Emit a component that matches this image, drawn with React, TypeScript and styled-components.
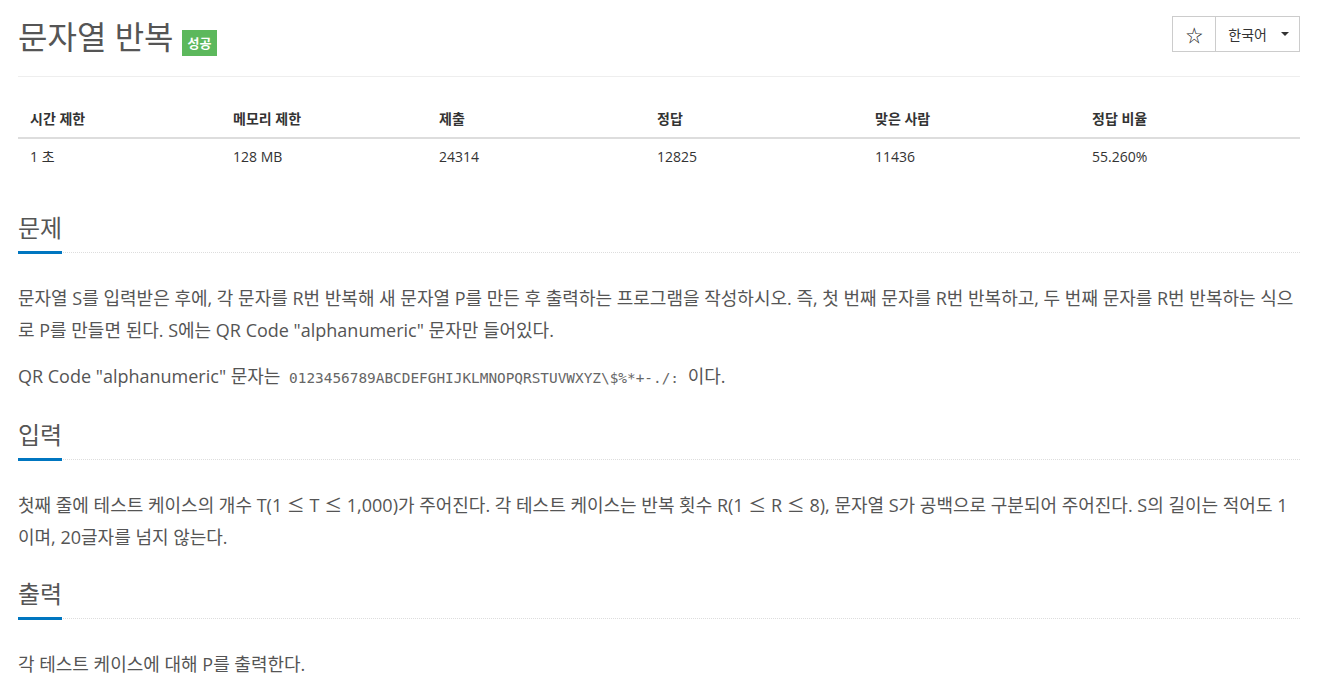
import React from "react";
import styled, { createGlobalStyle } from "styled-components";

const GlobalStyle = createGlobalStyle`
  html, body { margin: 0; padding: 0; background: #fff; }
  body {
    font-family: "Open Sans", "Noto Sans CJK KR", sans-serif;
    color: #333;
    font-size: 14px;
  }
`;

const Page = styled.div`
  padding: 0 22px 0 18px;
`;

const Header = styled.header`
  display: flex;
  justify-content: space-between;
  align-items: flex-start;
  padding-top: 16px;
  padding-bottom: 19px;
  border-bottom: 1px solid #eee;
`;

const Title = styled.h1`
  display: flex;
  align-items: center;
  margin: 1px 0 0;
  font-size: 32px;
  line-height: 40px;
  font-weight: 400;
  color: #555;
`;

const Badge = styled.span`
  display: inline-block;
  margin: 11px 0 0 8px;
  padding: 0 6px;
  height: 26px;
  line-height: 26px;
  font-size: 13px;
  font-weight: 700;
  color: #fff;
  background: #5cb85c;
`;

const BtnGroup = styled.div`
  display: flex;
`;

const Btn = styled.button<{ $first?: boolean }>`
  display: flex;
  align-items: center;
  justify-content: center;
  gap: 14px;
  height: 36px;
  min-width: ${(p) => (p.$first ? "44px" : "0")};
  padding: ${(p) => (p.$first ? "0" : "0 10px 0 12px")};
  border: 1px solid #ccc;
  border-left-width: ${(p) => (p.$first ? "1px" : "0")};
  background: #fff;
  color: #333;
  font-family: "Open Sans", "Noto Sans CJK KR", sans-serif;
  font-size: 14px;
  cursor: pointer;
`;

const Star = styled.span`
  font-family: "Noto Sans CJK KR", "DejaVu Sans", sans-serif;
  font-size: 17px;
  line-height: 1;
  color: #222;
`;

const Caret = styled.span`
  display: inline-block;
  width: 0;
  height: 0;
  border-top: 4px solid #333;
  border-left: 4px solid transparent;
  border-right: 4px solid transparent;
`;

const InfoTable = styled.div`
  margin: 24px 0 36px;
`;

const InfoRow = styled.div<{ $head?: boolean }>`
  display: grid;
  grid-template-columns: 203px 206px 218px 218px 217px 1fr;
  border-bottom: ${(p) => (p.$head ? "2px solid #ddd" : "0")};
`;

const Cell = styled.div<{ $head?: boolean }>`
  padding: 8px 12px;
  line-height: 20px;
  font-size: 14px;
  font-weight: ${(p) => (p.$head ? 700 : 400)};
  color: #333;
`;

const Section = styled.section`
  & + & {
    margin-top: 24px;
  }
`;

const SectionHead = styled.div`
  display: flex;
  border-bottom: 1px dotted #ddd;
  margin-bottom: 29px;
`;

const SectionTitle = styled.h2`
  margin: 0 0 -2px;
  padding-bottom: 6px;
  font-size: 24px;
  line-height: 34px;
  font-weight: 400;
  color: #555;
  border-bottom: 3px solid #0076c0;
`;

const Para = styled.p`
  margin: 0 0 14px;
  font-size: 18px;
  line-height: 32px;
  color: #555;
`;

const Sym = styled.span`
  font-family: "Noto Sans CJK KR", sans-serif;
  line-height: 0;
`;

const Code = styled.code`
  font-family: "DejaVu Sans Mono", monospace;
  font-size: 14.4px;
  padding: 2px 4px;
  color: #666;
`;

const heads = ["시간 제한", "메모리 제한", "제출", "정답", "맞은 사람", "정답 비율"];
const values = ["1 초", "128 MB", "24314", "12825", "11436", "55.260%"];

export default function App() {
  return (
    <>
      <GlobalStyle />
      <Page>
        <Header>
          <Title>
            문자열 반복<Badge>성공</Badge>
          </Title>
          <BtnGroup>
            <Btn $first>
              <Star>☆</Star>
            </Btn>
            <Btn>
              한국어
              <Caret />
            </Btn>
          </BtnGroup>
        </Header>

        <InfoTable>
          <InfoRow $head>
            {heads.map((h) => (
              <Cell $head key={h}>
                {h}
              </Cell>
            ))}
          </InfoRow>
          <InfoRow>
            {values.map((v) => (
              <Cell key={v}>{v}</Cell>
            ))}
          </InfoRow>
        </InfoTable>

        <Section>
          <SectionHead>
            <SectionTitle>문제</SectionTitle>
          </SectionHead>
          <Para>
            문자열 S를 입력받은 후에, 각 문자를 R번 반복해 새 문자열 P를 만든 후 출력하는 프로그램을 작성하시오. 즉, 첫 번째 문자를 R번 반복하고, 두 번째 문자를 R번 반복하는 식으로 P를 만들면 된다. S에는 QR Code "alphanumeric" 문자만 들어있다.
          </Para>
          <Para>
            QR Code "alphanumeric" 문자는 <Code>0123456789ABCDEFGHIJKLMNOPQRSTUVWXYZ\$%*+-./:</Code> 이다.
          </Para>
        </Section>

        <Section>
          <SectionHead>
            <SectionTitle>입력</SectionTitle>
          </SectionHead>
          <Para>
            첫째 줄에 테스트 케이스의 개수 T(1 <Sym>≤</Sym> T <Sym>≤</Sym> 1,000)가 주어진다. 각 테스트 케이스는 반복 횟수 R(1 <Sym>≤</Sym> R <Sym>≤</Sym> 8), 문자열 S가 공백으로 구분되어 주어진다. S의 길이는 적어도 1이며, 20글자를 넘지 않는다.
          </Para>
        </Section>

        <Section>
          <SectionHead>
            <SectionTitle>출력</SectionTitle>
          </SectionHead>
          <Para>각 테스트 케이스에 대해 P를 출력한다.</Para>
        </Section>
      </Page>
    </>
  );
}
